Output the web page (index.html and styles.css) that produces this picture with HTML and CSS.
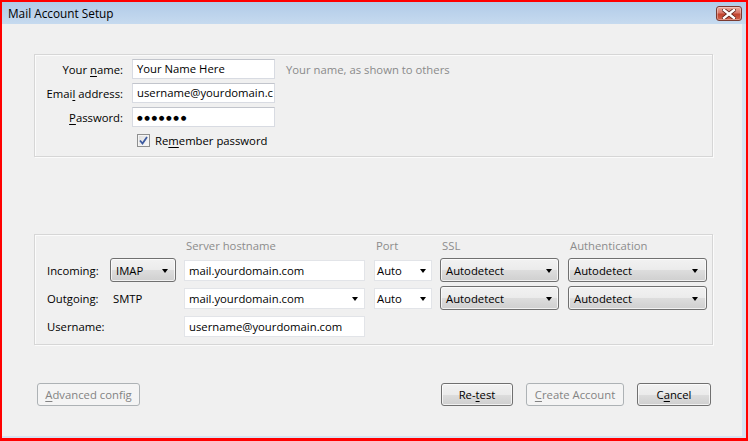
FILE: index.html
```html
<!DOCTYPE html>
<html>
<head>
<meta charset="utf-8">
<title>Mail Account Setup</title>
<link rel="stylesheet" href="styles.css">
</head>
<body>
<div class="window">
  <div class="titlebar">
    <span class="title">Mail Account Setup</span>
    <div class="close">
      <svg width="14" height="10" viewBox="0 0 14 10">
        <path d="M2 1 L12 9 M12 1 L2 9" stroke="#5a1e16" stroke-width="4" stroke-linecap="square"/>
        <path d="M2 1 L12 9 M12 1 L2 9" stroke="#ffffff" stroke-width="2.4" stroke-linecap="square"/>
      </svg>
    </div>
  </div>
  <div class="client">
    <div class="group identity">
      <label class="lbl">Your <u>n</u>ame:</label>
      <div class="field">Your Name Here</div>
      <span class="hint">Your name, as shown to others</span>

      <label class="lbl">Emai<u>l</u> address:</label>
      <div class="field">username@yourdomain.c</div>
      <span></span>

      <label class="lbl"><u>P</u>assword:</label>
      <div class="field"><span class="dots">●●●●●●●</span></div>
      <span></span>

      <span></span>
      <div class="remember">
        <span class="checkbox">
          <svg width="9" height="9" viewBox="0 0 9 9"><path d="M1 4.5 L3.5 7.5 L8 1" fill="none" stroke="#3c5aa0" stroke-width="1.8"/></svg>
        </span>
        <span>Re<u>m</u>ember password</span>
      </div>
    </div>

    <div class="group server">
      <span></span>
      <span></span>
      <span class="head">Server hostname</span>
      <span class="head">Port</span>
      <span class="head">SSL</span>
      <span class="head">Authentication</span>

      <span class="rlbl">Incoming:</span>
      <div class="drop w-type">IMAP<i class="arrow"></i></div>
      <div class="box w-host">mail.yourdomain.com</div>
      <div class="box w-port">Auto<i class="arrow"></i></div>
      <div class="drop w-ssl">Autodetect<i class="arrow"></i></div>
      <div class="drop w-auth">Autodetect<i class="arrow"></i></div>

      <span class="rlbl">Outgoing:</span>
      <span class="smtp">SMTP</span>
      <div class="box w-host">mail.yourdomain.com<i class="arrow"></i></div>
      <div class="box w-port">Auto<i class="arrow"></i></div>
      <div class="drop w-ssl">Autodetect<i class="arrow"></i></div>
      <div class="drop w-auth">Autodetect<i class="arrow"></i></div>

      <span class="rlbl">Username:</span>
      <span></span>
      <div class="box w-host">username@yourdomain.com</div>
    </div>

    <div class="actions">
      <div class="btn disabled w-adv"><u>A</u>dvanced config</div>
      <div class="spacer"></div>
      <div class="btn w-retest">Re-<u>t</u>est</div>
      <div class="btn disabled w-create"><u>C</u>reate Account</div>
      <div class="btn w-cancel">C<u>a</u>ncel</div>
    </div>
  </div>
</div>
</body>
</html>
```
FILE: styles.css
```css
* { box-sizing: border-box; }
html, body { margin: 0; padding: 0; }
body {
  width: 748px;
  height: 441px;
  overflow: hidden;
  font-family: "Open Sans", "Noto Sans", sans-serif;
  font-size: 11.3px;
  color: #000;
  background: #fff;
}
u { text-decoration: underline; text-underline-offset: 2px; }

.window {
  width: 748px;
  height: 441px;
  border: 2px solid #ff0000;
  border-bottom-width: 3px;
  background: #d6e3f2;
  display: flex;
  flex-direction: column;
}
.titlebar {
  height: 22px;
  flex: none;
  display: flex;
  align-items: center;
  justify-content: space-between;
  padding: 0 4px 0 6px;
  background: linear-gradient(#b1cbe8, #c6daef);
}
.title { font-size: 11.8px; color: #000; margin-top: -1px; }
.close {
  width: 26px;
  height: 15px;
  align-self: flex-start;
  margin-top: 4px;
  border: 1px solid #7b3a30;
  border-radius: 3px;
  background: linear-gradient(#e9a99c 0%, #d8786a 45%, #c0432e 55%, #d2624a 100%);
  display: flex;
  align-items: center;
  justify-content: center;
  box-shadow: inset 0 0 0 1px rgba(255,255,255,0.35);
}

.client {
  flex: 1;
  margin: 0 4px 2px 0;
  background: #f0f0f0;
  display: flex;
  flex-direction: column;
}

.group {
  border: 1px solid #d6d6d6;
  box-shadow: 1px 1px 0 #fbfbfb, inset 1px 1px 0 #fbfbfb;
  background: #f0f0f0;
  margin-left: 32px;
  width: 679px;
}

.identity {
  margin-top: 30px;
  display: grid;
  grid-template-columns: 97px 143px 1fr;
  grid-auto-rows: 24px;
  align-items: center;
  padding: 2px 0 3px 0;
}
.lbl { text-align: right; padding-right: 9px; }
.field {
  height: 20px;
  background: #fff;
  border: 1px solid #d8dbe2;
  border-top-color: #c2c5cc;
  padding: 0 4px;
  line-height: 18px;
  white-space: nowrap;
  overflow: hidden;
}
.hint { color: #8a8a8a; padding-left: 11px; }
.dots { font-family: "DejaVu Sans", sans-serif; font-size: 6.5px; letter-spacing: 1.6px; position: relative; top: -1px; }
.remember {
  grid-column: 2 / span 2;
  display: flex;
  align-items: center;
  gap: 5px;
  padding-left: 5px;
  margin-top: -1px;
}
.checkbox {
  width: 13px;
  height: 13px;
  border: 1px solid #8e8f8f;
  background: linear-gradient(135deg, #dcdcdc, #fbfbfb);
  box-shadow: inset 0 0 0 1px #f4f4f4;
  display: flex;
  align-items: center;
  justify-content: center;
}

.server {
  margin-top: 77px;
  display: grid;
  grid-template-columns: 63px 74px 190px 66px 128px 139px;
  grid-template-rows: 21px 28px 28px 28px;
  align-items: center;
  padding: 0 0 4px 12px;
}
.head { color: #8c8c8c; padding-left: 2px; }
.rlbl { color: #000; }
.smtp { padding-left: 3px; }

.drop, .box {
  position: relative;
  display: flex;
  align-items: center;
  white-space: nowrap;
}
.drop {
  height: 24px;
  border: 1px solid #707070;
  border-radius: 3px;
  background: linear-gradient(#f2f2f2 0%, #ebebeb 50%, #dddddd 51%, #cfcfcf 100%);
  box-shadow: inset 0 0 0 1px rgba(255,255,255,0.7);
  padding-left: 5px;
}
.box {
  height: 21px;
  background: #fff;
  border: 1px solid #e2e4e8;
  padding-left: 4px;
}
.arrow {
  position: absolute;
  top: 50%;
  right: 7px;
  margin-top: -1px;
  width: 0;
  height: 0;
  border-left: 3.5px solid transparent;
  border-right: 3.5px solid transparent;
  border-top: 4px solid #000;
}
.w-type { width: 66px; }
.w-host { width: 181px; }
.w-port { width: 58px; padding-left: 2px; }
.w-ssl { width: 119px; }
.w-auth { width: 139px; }
.w-type .arrow { right: 7px; }
.w-host .arrow { right: 6px; }
.w-port .arrow { right: 5px; }
.w-ssl .arrow { right: 6px; }
.w-auth .arrow { right: 8px; }

.actions {
  margin-top: 38px;
  display: flex;
  align-items: center;
  padding: 0 31px 0 35px;
  gap: 13px;
}
.spacer { flex: 1; }
.btn {
  height: 23px;
  border: 1px solid #707070;
  border-radius: 3px;
  background: linear-gradient(#f2f2f2 0%, #ebebeb 50%, #dddddd 51%, #cfcfcf 100%);
  box-shadow: inset 0 0 0 1px rgba(255,255,255,0.7);
  display: flex;
  align-items: center;
  justify-content: center;
  white-space: nowrap;
}
.btn.disabled {
  border-color: #adb2b5;
  background: #f4f4f4;
  color: #838383;
  box-shadow: none;
}
.w-adv { width: 103px; }
.w-retest { width: 72px; }
.w-create { width: 98px; }
.w-cancel { width: 74px; }
```
